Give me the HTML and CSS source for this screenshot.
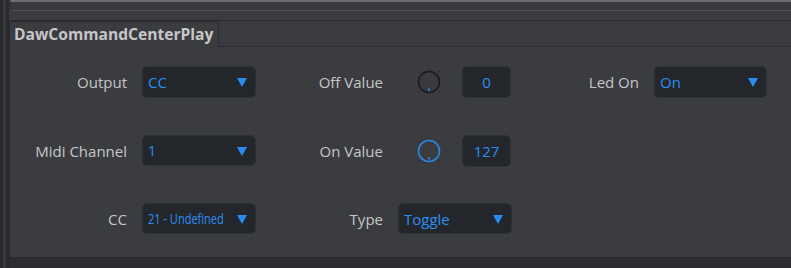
FILE: index.html
```html
<!DOCTYPE html>
<html>
<head>
<meta charset="utf-8">
<link rel="stylesheet" href="styles.css">
</head>
<body>
<div class="app">
  <div class="rail"></div>
  <div class="main">
    <div class="topbar"><div class="topinner"></div></div>
    <div class="tabs">
      <div class="tab">DawCommandCenterPlay</div>
      <div class="tabfill"></div>
    </div>
    <div class="panel">
      <div class="grid">
        <div class="label">Output</div>
        <div class="select"><span class="val">CC</span><span class="arrow"></span></div>
        <div class="label">Off Value</div>
        <div class="knobcell">
          <svg class="knob" width="28" height="28" viewBox="0 0 28 28">
            <g stroke="#2a2b2e" stroke-width="1">
              <line x1="5" y1="5" x2="3" y2="3"/><line x1="23" y1="5" x2="25" y2="3"/>
              <line x1="5" y1="23" x2="3" y2="25"/><line x1="23" y1="23" x2="25" y2="25"/>
            </g>
            <circle cx="14" cy="14" r="10.5" fill="#393a3e" stroke="#1b1c1f" stroke-width="1.6"/>
            <rect x="13" y="20.5" width="2" height="2" fill="#2b88e8"/>
          </svg>
          <div class="numbox">0</div>
        </div>
        <div class="label">Led On</div>
        <div class="select"><span class="val">On</span><span class="arrow"></span></div>

        <div class="label">Midi Channel</div>
        <div class="select"><span class="val small">1</span><span class="arrow"></span></div>
        <div class="label">On Value</div>
        <div class="knobcell">
          <svg class="knob" width="28" height="28" viewBox="0 0 28 28">
            <g stroke="#2a2b2e" stroke-width="1">
              <line x1="5" y1="5" x2="3" y2="3"/><line x1="23" y1="5" x2="25" y2="3"/>
              <line x1="5" y1="23" x2="3" y2="25"/><line x1="23" y1="23" x2="25" y2="25"/>
            </g>
            <circle cx="14" cy="14" r="10.5" fill="#3a3b3f" stroke="#2a86e2" stroke-width="1.6"/>
            <rect x="13" y="20.5" width="2" height="2" fill="#2b88e8"/>
          </svg>
          <div class="numbox">127</div>
        </div>
        <div class="empty"></div>
        <div class="empty"></div>

        <div class="label">CC</div>
        <div class="select"><span class="val narrow">21 - Undefined</span><span class="arrow"></span></div>
        <div class="label">Type</div>
        <div class="select"><span class="val">Toggle</span><span class="arrow"></span></div>
        <div class="empty"></div>
        <div class="empty"></div>
      </div>
    </div>
    <div class="footer"></div>
  </div>
</div>
</body>
</html>
```

FILE: styles.css
```css
html, body {
  margin: 0;
  padding: 0;
  background: #2c2d30;
}
body {
  width: 791px;
  height: 268px;
  overflow: hidden;
  font-family: "Open Sans", "DejaVu Sans", sans-serif;
}
.app {
  display: flex;
  height: 268px;
}
.rail {
  width: 9px;
  flex: none;
  background: linear-gradient(to right, #2a2b2e 0, #2a2b2e 3px, #393a3e 3px, #393a3e 6px, #28292c 6px, #28292c 9px);
}
.main {
  flex: 1;
  display: flex;
  flex-direction: column;
  min-width: 0;
}
.topbar {
  height: 21px;
  box-sizing: border-box;
  background: #3b3c40;
  border-bottom: 1px solid #2a2b2e;
}
.topinner {
  height: 11px;
  box-sizing: border-box;
  margin-left: 1px;
  background: #393a3e;
  border-top: 2px solid #6d6d72;
  border-bottom: 1px solid #505155;
  border-left: 1px solid #2c2d30;
  border-bottom-left-radius: 4px;
}
.tabs {
  display: flex;
  height: 26px;
  background: #3a3b3f;
}
.tab {
  width: 210px;
  box-sizing: border-box;
  background: #3b3c40;
  border: 1px solid #2a2b2e;
  border-bottom: none;
  border-radius: 4px 4px 0 0;
  color: #c6c6c8;
  font-weight: 700;
  font-size: 15.6px;
  line-height: 25px;
  padding-left: 4px;
  white-space: nowrap;
}
.tabfill {
  flex: 1;
  border-bottom: 1px solid #2a2b2e;
}
.panel {
  height: 211px;
  box-sizing: border-box;
  background: #3b3c40;
  border-left: 1px solid #2e2f33;
  border-bottom: 1px solid #2a2b2e;
  border-bottom-left-radius: 4px;
  padding-top: 19px;
}
.footer {
  flex: 1;
  background: #2d2e31;
}
.grid {
  display: grid;
  grid-template-columns: 132px 114px 142px 114px 142px 113px;
  grid-template-rows: 32px 31px 31px;
  row-gap: 37px;
}
.label {
  color: #c6c6c8;
  font-size: 15px;
  text-align: right;
  padding-right: 15px;
  display: flex;
  align-items: center;
  justify-content: flex-end;
  white-space: nowrap;
}
.select {
  position: relative;
  box-sizing: border-box;
  background: #23272c;
  border: 1px solid #2e3136;
  border-radius: 5px;
  display: flex;
  align-items: center;
  padding-left: 5px;
  color: #2d8ef0;
  font-size: 15px;
}
.val.small {
  font-size: 14px;
}
.val.narrow {
  font-size: 14.5px;
  display: inline-block;
  transform: scaleX(0.76);
  transform-origin: left center;
  white-space: nowrap;
}
.arrow {
  position: absolute;
  right: 8px;
  top: 50%;
  margin-top: -4px;
  width: 0;
  height: 0;
  border-left: 5.5px solid transparent;
  border-right: 5.5px solid transparent;
  border-top: 9px solid #2a8cf0;
}
.knobcell {
  display: flex;
  align-items: center;
  padding-left: 17px;
  gap: 19px;
}
.knob {
  display: block;
  flex: none;
}
.numbox {
  width: 49px;
  height: 32px;
  box-sizing: border-box;
  background: #23272c;
  border: 1px solid #2e3136;
  border-radius: 5px;
  color: #2d8ef0;
  font-size: 15px;
  display: flex;
  align-items: center;
  justify-content: center;
}
```
